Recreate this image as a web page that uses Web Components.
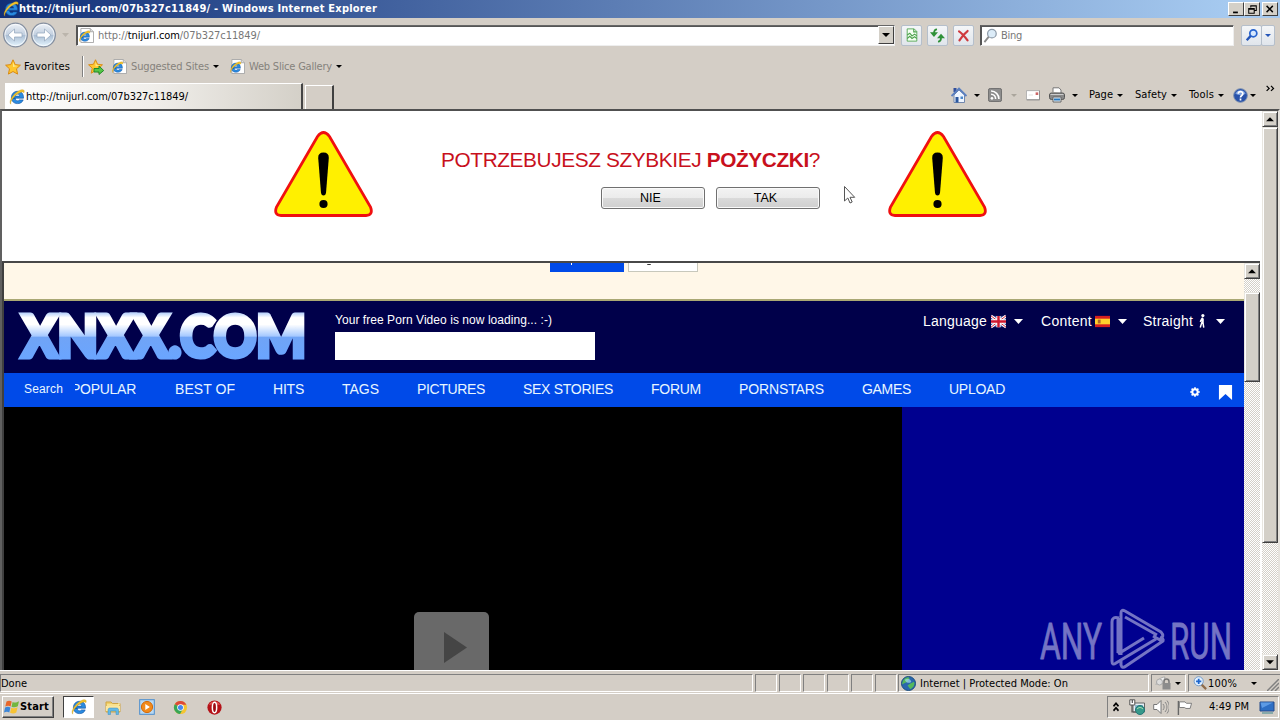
<!DOCTYPE html>
<html lang="en"><head><meta charset="utf-8"><title>Browser desktop</title>
<style>html,body{margin:0;height:100%;overflow:hidden;background:#d4d0c8}</style></head>
<body><desktop-screen></desktop-screen>
<script>
const define=(name,html,after)=>customElements.define(name,class extends HTMLElement{
  constructor(){super();this.attachShadow({mode:'open'});}
  connectedCallback(){this.shadowRoot.innerHTML=typeof html==='function'?html(this):html;if(after)after(this);}
});

/* Text run spaced out to an exact width */
define('fit-text',`<style>:host{display:block;flex:none;white-space:pre;line-height:1.2}span{display:inline-block}</style><span><slot></slot></span>`,el=>{
  const s=el.shadowRoot.querySelector('span'),w=+el.getAttribute('w');
  el.style.width=w+'px';
  s.style.letterSpacing=((w-s.getBoundingClientRect().width)/el.textContent.length)+'px';
});

const E=`<path d="M2.500 9.200h12C14.800 4.800 12.300 2.300 8.600 2.300S2.400 5 2.400 8.600s2.400 6 6.100 6c2.900 0 4.900-1.300 5.700-3.700h-3.800c-.4.600-1 .9-1.800.9-1.400 0-2.200-1-2.300-2.600zM6.400 7.100c.2-1.300 1-2 2.200-2s2 .7 2.100 2z" fill="#2a8be0" stroke="#0f4f9e" stroke-width=".6"/><path d="M2 15.200C-1.300 13.200 4.500 3.800 11 1.200c3.400-1.200 5-.2 3.900 2.600-.6-1.800-5.400-.3-9.300 3.700C2.500 10.800 1 14 2 15.200z" fill="#f2c32c" stroke="#b98d18" stroke-width=".3"/>`;
const PAGE=`<path d="M2 .5h10l3.500 3.500v11.500H2z" fill="#fff" stroke="#a7a7a7"/><path d="M12 .5V4h3.500" fill="#ddd" stroke="#aaa"/><g transform="translate(-.5 2.500) scale(.8)">${E}</g>`;
const STAR=`<path d="M8 .8l2.200 4.800 5.200.6-3.900 3.600 1.100 5.300L8 12.500l-4.600 2.600 1.100-5.300L.6 6.200l5.200-.6z" fill="#ffc62e" stroke="#d98a13"/><path d="M8 3l1.400 3.500 3.500.5L8 8z" fill="#ffe98a"/>`;
const ICONS={
 ie:E,page:PAGE,star:STAR,
 addstar:`<g transform="scale(.94)">${STAR}</g><path d="M6 9.500h5V7l4.700 4.500L11 15.500V13H6z" fill="#55c646" stroke="#23892a"/>`,
 tri:`<path d="M0 0h16L8 9z" fill="currentColor"/>`,
 compat:`<path d="M2.500 1h8l3 3v11h-11z" fill="#f4fff2" stroke="#4fa34f"/><path d="M10 1v3.500h3.500M2.500 8l3-2 2.500 3 3-2 2.500 2M2.500 12l3-2.500L8 12l3-2 2.500 2" fill="none" stroke="#4fa34f" stroke-width="1.300"/>`,
 refresh:`<path d="M7.500 1.500C5.500 1.500 4.300 2.500 4.300 6" fill="none" stroke="#2f9138" stroke-width="2"/><path d="M0 4.500h8.500L4.200 9.500z" fill="#2f9138"/><path d="M8.500 14.500c2 0 3.200-1 3.200-4.500" fill="none" stroke="#2f9138" stroke-width="2"/><path d="M7.500 11H16l-4.200-5z" fill="#2f9138"/>`,
 stop:`<path d="M2.500 3c3 2 7 6.500 10.500 11M13 2.500C9 5.500 6 9 3 14" fill="none" stroke="#cf3a3e" stroke-width="2.700" stroke-linecap="round"/>`,
 mag:`<circle cx="9.500" cy="6" r="4.600" fill="#dcecf8" stroke="#8d9aa8" stroke-width="1.300"/><path d="M6 9.500L1.500 15" stroke="#8a8a8a" stroke-width="2"/>`,
 magb:`<circle cx="9.500" cy="6" r="4" fill="#d6e8ff" stroke="#2864cf" stroke-width="2"/><path d="M6.500 9L2 14" stroke="#2455b8" stroke-width="2.600"/>`,
 home:`<path d="M2.500 1h3v4h-3z" fill="#314f9c"/><path d="M3 8v7.500h10.500V8L8 3z" fill="#eef5ff" stroke="#7187ad"/><path d="M.5 9L8 1.500 15.500 9" fill="none" stroke="#5a7fc0" stroke-width="1.800"/><path d="M4.500 10h3v5.500h-3z" fill="#2a579e"/><path d="M9.500 9.500h2.500V12H9.500z" fill="#4c88ca"/>`,
 rss:`<rect x=".5" y=".5" width="15" height="15" rx="2" fill="#8d8d8d" stroke="#666"/><circle cx="4.500" cy="11.800" r="1.500" fill="#fff"/><path d="M3.500 7.200c3 0 5.200 2.300 5.200 5.500M3.500 3.500c5 0 9 4 9 9.200" fill="none" stroke="#fff" stroke-width="1.800"/>`,
 mail:`<path d="M.5 3h15v10.500H.5z" fill="#fff" stroke="#a8a8a8"/><path d="M1 13.500h14.500V3" fill="none" stroke="#888"/><path d="M11 5h3v3h-3z" fill="#c66"/><path d="M3 8h5" stroke="#ddd"/>`,
 print:`<path d="M4 5V.8h6L12 3v3" fill="#fff" stroke="#777"/><rect x=".5" y="6" width="15" height="6.500" rx="2" fill="#888" stroke="#555"/><path d="M1.500 7.500h13" stroke="#ccc"/><path d="M4 10h8v5H4z" fill="#e9f3fc" stroke="#666"/><path d="M5 12.500h6" stroke="#2878bd" stroke-width="2"/>`,
 help:`<circle cx="8" cy="8" r="7.300" fill="#2952aa" stroke="#7a8eae"/><path d="M2.500 6a6 6 0 0 1 11 0c-3 2-8 2-11 0z" fill="#7ba0e0"/><path d="M5.600 6.200C5.600 3 10.500 3 10.500 6c0 2-2.500 2-2.500 4M8 11.200v2" fill="none" stroke="#fff" stroke-width="1.800"/>`,
 gear:`<circle cx="8" cy="8" r="4.300" fill="none" stroke="#fff" stroke-width="3.200"/><path d="M8 .3v3M8 12.700v3M.3 8h3M12.700 8h3M2.600 2.600l2 2M11.400 11.400l2 2M2.600 13.400l2-2M11.400 4.600l2-2" stroke="#fff" stroke-width="2.600"/>`,
 mark:`<path d="M1 0h14v16L8 9.500 1 16z" fill="#fff"/>`,
 man:`<circle cx="9" cy="1.800" r="1.800" fill="#fff"/><path d="M8.500 4v6M8 9l-2 6.500M9 9L10 15.500M8 5L6 9M9.200 5v5" stroke="#fff" stroke-width="1.700" fill="none"/>`,
 uk:`<path d="M0 2h16v12H0z" fill="#36408e"/><path d="M0 2l16 12M16 2L0 14" stroke="#fff" stroke-width="3"/><path d="M0 2l16 12M16 2L0 14" stroke="#d12335"/><path d="M8 2v12M0 8h16" stroke="#fff" stroke-width="4.600"/><path d="M8 2v12M0 8h16" stroke="#cf1930" stroke-width="2.600"/>`,
 es:`<path d="M0 2h16v12H0z" fill="#d51e20"/><path d="M0 5h16v6H0z" fill="#ffd02c"/><path d="M3 6h3v4H3z" fill="#b36a28"/>`,
 win:`<path d="M2.500 2.500C4.500 1.300 6 1.500 7.700 2.500L6.600 7.400C4.800 6.400 3.200 6.500 1.300 7.600z" fill="#e8672a"/><path d="M8.600 3c2 1 3.800.8 6.400-.7l-1.200 5c-2.200 1.200-4.200 1.200-6.300.4z" fill="#72b63e"/><path d="M1.100 8.500c2-1.100 3.500-1 5.300-.1l-1.100 5c-1.800-1-3.500-.9-5.300.2z" fill="#3c86d8"/><path d="M7.300 8.700c2.200.9 4 .8 6.300-.4l-1.300 5.200c-2 1.200-4 1.200-6.200.2z" fill="#f7c334"/>`,
 folder:`<path d="M1 3h5l1.500 1.500H15V13H1z" fill="#f1cf68" stroke="#cfa544"/><path d="M2 6h12V3.500" fill="none" stroke="#fff3b6"/><path d="M1 7h14v5H1z" fill="#fbe7a0"/><path d="M3 15.500V11c0-1.500 1-2 2-2h6.500c1 0 2 .5 2 2v4.500h-2.500V12H5.500v3.500z" fill="#63b9e5" stroke="#3b8dc0" stroke-width=".5"/>`,
 media:`<rect x=".7" y=".7" width="14.600" height="14.600" fill="#b9d9f2" stroke="#4b8dcc"/><circle cx="8" cy="8" r="5.600" fill="#f28a1b" stroke="#d36b0b"/><path d="M6.300 5v6l4.600-3z" fill="#fff"/>`,
 chrome:`<circle cx="8" cy="8" r="7" fill="#f4c531"/><path d="M8 8L1.900 4.500A7 7 0 0 1 14.200 5H8z" fill="#dd4938"/><path d="M8 8L1.900 4.500A7 7 0 0 0 7.500 15L10.600 9.500z" fill="#38a657"/><circle cx="8" cy="8" r="3.500" fill="#fff"/><circle cx="8" cy="8" r="2.700" fill="#4588ee"/>`,
 opera:`<circle cx="8" cy="8" r="7.600" fill="#b51218"/><path d="M2 5a7 7 0 0 1 12 0z" fill="#df4d4c"/><ellipse cx="8" cy="8" rx="2.300" ry="5.500" fill="#9d0b12" stroke="#fff" stroke-width="1.600"/>`,
 globe:`<circle cx="8" cy="8" r="7.500" fill="#2967ad" stroke="#174a7c"/><path d="M2 5c3-4 6-4 7-3l-2 4-4 2-2 1zM10 8l4-2c1 4-1 6-4 8l-3-4z" fill="#54b85c"/><path d="M4 4c3-2 6-1 7 2-2 2-5 2-7-2z" fill="#9fd8ef" opacity=".7"/>`,
 lock:`<path d="M1 10c1-5 5-8 9-8l-1 4" fill="#eee" stroke="#aaa"/><circle cx="4.500" cy="7" r="3" fill="#ddd" stroke="#aaa"/><path d="M9 8V6.500a2.500 2.500 0 0 1 5 0V8" fill="none" stroke="#777" stroke-width="1.500"/><rect x="7.500" y="8" width="8" height="6.500" fill="#8c8c8c"/>`,
 zoom:`<path d="M9 9l6 6" stroke="#8f6c4c" stroke-width="2.500"/><circle cx="6.500" cy="6" r="5.200" fill="#e1f0ff" stroke="#6b94c3"/><path d="M6.500 3v6M3.500 6h6" stroke="#1d65cc" stroke-width="2"/>`,
 up2:`<path d="M4 7l4-4 4 4M4 13l4-4 4 4" fill="none" stroke="#000" stroke-width="2.400"/>`,
 net:`<path d="M4 4h11.500v9H4z" fill="#e4edf2" stroke="#666"/><path d="M6 6h8v5H6z" fill="#8fb9d0"/><circle cx="11" cy="11" r="4.500" fill="#36998a" stroke="#277"/><path d="M8 10c2-2 4-2 6 0" stroke="#bce4b4" fill="none"/><path d="M.8.8h5V6h-5z" fill="#fff" stroke="#555"/><path d="M3.300 1v3M3 6v7h4" fill="none" stroke="#555" stroke-width="1.200"/>`,
 sound:`<path d="M.7 5.500H4L8 1.500v13L4 10.500H.7z" fill="#fff" stroke="#777"/><path d="M10 5c1.500 2 1.500 4 0 6M12 3c2.600 3 2.600 7 0 10M14 1.500c3 4 3 9 0 13" fill="none" stroke="#888"/>`,
 flag:`<path d="M1.500 1v15" stroke="#666" stroke-width="1.500"/><path d="M2.500 2h6l1.500 1.500h5.500L14 9H9.500L8 8H2.500z" fill="#fff" stroke="#777"/>`,
 desk:`<path d="M1 3h14v9H1z" fill="#2e6fc4" stroke="#244a8a"/><path d="M1.500 3.500H14L3 9z" fill="#5d9be5"/><path d="M3 14h11" stroke="#8aa" stroke-width="2"/>`,
 chev:`<path d="M1 3l4 4-4 4M8 3l4 4-4 4" fill="none" stroke="#000" stroke-width="2"/>`,
 min:`<path d="M3 11h7v2.500H3z"/>`,
 restore:`<path d="M5.500 5V2.500h8v7H11M5.500 3h8M2.500 6.500h8v7h-8zM2.500 7.500h8" fill="none" stroke="#000" stroke-width="1.500"/>`,
 close:`<path d="M2.500 3l10 10M12.500 3l-10 10" stroke="#000" stroke-width="2.300"/>`,
 arrU:`<path d="M3.500 10.500h9L8 6z"/>`,arrD:`<path d="M3.500 6h9L8 10.500z"/>`
};
define('x-icon',el=>{const s=el.getAttribute('s')||16,h=el.getAttribute('h')||s;
 return `<style>:host{display:block;flex:none;width:${s}px;height:${h}px}svg{display:block}</style><svg width="${s}" height="${h}" viewBox="0 0 16 ${el.getAttribute('n')==='tri'?9:16}" preserveAspectRatio="none">${ICONS[el.getAttribute('n')]}</svg>`;});

define('title-bar',`<style>:host{display:flex;align-items:center;box-sizing:border-box;padding:0 2px 0 3px;background:linear-gradient(90deg,#123078,#a6caf0 96%);color:#fff;font:bold 11px "DejaVu Sans Condensed","DejaVu Sans",sans-serif}
b{display:grid;place-items:center;box-sizing:border-box;width:16px;height:14px;background:#d4d0c8;border:1px solid;border-color:#fff #404040 #404040 #fff}b.c{margin-left:2px}.f{flex:1}</style>
<x-icon n="ie"></x-icon><fit-text w="358">http://tnijurl.com/07b327c11849/ - Windows Internet Explorer</fit-text><div class="f"></div><b><x-icon n="min" s="11"></x-icon></b><b><x-icon n="restore" s="11"></x-icon></b><b class="c"><x-icon n="close" s="10"></x-icon></b>`);

define('nav-circle',`<style>:host{display:block;flex:none;width:27px;height:26px}</style><svg width="27" height="26" viewBox="0 0 27 26"><defs><linearGradient id="g" x2="0" y2="1"><stop offset="0" stop-color="#eef2f7"/><stop offset=".48" stop-color="#c3d0e0"/><stop offset=".5" stop-color="#a9bcd2"/><stop offset="1" stop-color="#e6f6ff"/></linearGradient></defs><circle cx="13.500" cy="13" r="11.800" fill="url(#g)" stroke="#8690a0" stroke-width="1.300"/><circle cx="13.500" cy="13" r="10.600" fill="none" stroke="#fff" opacity=".7"/><path class="a" d="M6 13l6.500-6v4H20v4h-7.500v4z" fill="#fff" stroke="#8fa3ba" stroke-width=".7"/></svg>`,el=>{if(el.hasAttribute('fwd'))el.shadowRoot.querySelector('.a').setAttribute('transform','translate(27) scale(-1 1)');});

define('address-row',`<style>:host{display:flex;align-items:center;box-sizing:border-box;padding:0 5px 2px 2px;font:11px "DejaVu Sans Condensed","DejaVu Sans",sans-serif;color:#777}
.box{display:flex;align-items:center;box-sizing:border-box;height:21px;background:#fff;border:1px solid;border-color:#666 #eee #eee #555;box-shadow:inset 1px 1px #555}
.addr{width:819px;margin-left:7px;padding-left:2px}em{font-style:normal;color:#000}.f{flex:1}fit-text{padding-top:1px}
.dd{display:grid;place-items:center;box-sizing:border-box;width:16px;height:18px;background:#d4d0c8;border:1px solid;border-color:#fff #404040 #404040 #fff;color:#000}
.btn{display:grid;place-items:center;box-sizing:border-box;width:21px;height:21px;border:1px solid #b5bfcb;background:linear-gradient(#f4f6f8,#e0e5eb);border-radius:2px}
.s{width:254px;margin-left:6px;padding-left:2px}</style>
<nav-circle></nav-circle><nav-circle fwd style="margin-left:1px"></nav-circle><x-icon n="tri" s="7" h="4" style="margin-left:5px;color:#bbb5ac"></x-icon>
<div class="box addr"><x-icon n="page" s="15"></x-icon><fit-text w="162" style="margin-left:4px">http://<em>tnijurl.com</em>/07b327c11849/</fit-text><div class="f"></div><div class="dd"><x-icon n="tri" s="8" h="4"></x-icon></div></div>
<div class="btn" style="margin-left:6px"><x-icon n="compat" s="14"></x-icon></div><div class="btn" style="margin-left:5px"><x-icon n="refresh" s="15"></x-icon></div><div class="btn" style="margin-left:5px"><x-icon n="stop" s="13"></x-icon></div>
<div class="box s"><x-icon n="mag" s="15"></x-icon><fit-text w="21" style="margin-left:3px">Bing</fit-text></div><div class="f"></div>
<div class="btn"><x-icon n="magb" s="14"></x-icon></div><div class="btn" style="width:14px;color:#2455b8;margin-left:-1px"><x-icon n="tri" s="6" h="3"></x-icon></div>`);

define('favorites-row',`<style>:host{display:flex;align-items:center;box-sizing:border-box;padding:0 0 3px 5px;font:11px "DejaVu Sans Condensed","DejaVu Sans",sans-serif;color:#000}
i{width:1px;height:21px;background:#808080;border-right:1px solid #fff;margin-left:12px}.g{color:#85827c;padding-top:1px}</style>
<x-icon n="star"></x-icon><fit-text w="46" style="margin-left:3px">Favorites</fit-text><i></i><x-icon n="addstar" style="margin-left:4px"></x-icon>
<x-icon n="page" s="15" style="margin-left:8px"></x-icon><fit-text class="g" w="78" style="margin-left:4px">Suggested Sites</fit-text><x-icon n="tri" s="6" h="3" style="margin-left:4px"></x-icon>
<x-icon n="page" s="15" style="margin-left:11px"></x-icon><fit-text class="g" w="83" style="margin-left:4px">Web Slice Gallery</fit-text><x-icon n="tri" s="6" h="3" style="margin-left:4px"></x-icon>`);

define('tab-row',`<style>:host{display:flex;box-sizing:border-box;font:11px "DejaVu Sans Condensed","DejaVu Sans",sans-serif;color:#000}
.tab{display:flex;align-items:center;box-sizing:border-box;width:298px;height:26px;margin:1px 0 0 5px;padding:0 0 0 4px;background:linear-gradient(90deg,#fff,#f0eeea 50%,#d4d0c8);border-right:2px solid #444;border-top:1px solid #fff}
.new{box-sizing:border-box;width:29px;height:24px;margin:3px 0 0 2px;border:1px solid #fff;border-right:2px solid #404040;border-bottom:0}
.tools{display:flex;align-items:center;flex:1;height:26px;margin-left:617px;padding-bottom:2px}</style>
<div class="tab"><x-icon n="ie"></x-icon><fit-text w="162" style="margin-left:1px">http://tnijurl.com/07b327c11849/</fit-text></div><div class="new"></div>
<div class="tools"><x-icon n="home"></x-icon><x-icon n="tri" s="6" h="3" style="margin-left:7px"></x-icon><x-icon n="rss" s="14" style="margin-left:8px"></x-icon><x-icon n="tri" s="6" h="3" style="margin-left:9px;color:#aaa59c"></x-icon><x-icon n="mail" s="14" style="margin-left:9px"></x-icon><x-icon n="print" style="margin-left:9px"></x-icon><x-icon n="tri" s="6" h="3" style="margin-left:7px"></x-icon>
<fit-text w="24" style="margin-left:11px">Page</fit-text><x-icon n="tri" s="6" h="3" style="margin-left:4px"></x-icon><fit-text w="32" style="margin-left:12px">Safety</fit-text><x-icon n="tri" s="6" h="3" style="margin-left:4px"></x-icon><fit-text w="25" style="margin-left:12px">Tools</fit-text><x-icon n="tri" s="6" h="3" style="margin-left:4px"></x-icon><x-icon n="help" s="15" style="margin-left:9px"></x-icon><x-icon n="tri" s="6" h="3" style="margin-left:2px"></x-icon><x-icon n="chev" s="10" style="margin:-12px 0 0 10px"></x-icon></div>`);

define('scroll-bar',el=>`<style>:host{display:flex;flex-direction:column;flex:none;width:16px;background:repeating-conic-gradient(#fff 0 25%,#d4d0c8 0 50%) 0 0/2px 2px}
div{box-sizing:border-box;background:#d4d0c8;border:1px solid;border-color:#e8e6e0 #404040 #404040 #e8e6e0;box-shadow:inset 1px 1px #fff,inset -1px -1px #808080}
.b{display:grid;place-items:center;height:16px;flex:none}.t{height:${el.getAttribute('thumb')}px;margin-top:${el.getAttribute('gap')}px}.f{flex:1;visibility:hidden}</style>
<div class="b"><x-icon n="arrU" s="14"></x-icon></div><div class="t"></div><div class="f"></div>${el.hasAttribute('down')?'<div class="b"><x-icon n="arrD" s="14"></x-icon></div>':''}`);

define('warning-sign',`<style>:host{display:block;flex:none;width:100px;height:88px}</style><svg width="100" height="88" viewBox="0 0 100 88"><path d="M43.500 6.500Q49.500-1.500 55.500 6.500L96.500 77Q99.500 85 92 85.500H7Q-.5 85 2.500 77z" fill="#fff000" stroke="#f01010" stroke-width="2.800"/><path d="M44.200 28Q44 22.500 49.500 22.500T54.800 28L52 63Q51.500 65.500 49.500 65.500T47 63z"/><circle cx="49.500" cy="74" r="4.100"/></svg>`);

define('push-button',`<style>:host{display:grid;place-items:center;box-sizing:border-box;width:104px;height:22px;border:1px solid #707070;border-radius:3px;box-shadow:inset 0 0 0 1px #fafafa;background:linear-gradient(#f3f3f3,#ebebeb 50%,#dadada 50%,#cfcfcf);font:12.500px "Liberation Sans",sans-serif;color:#000;padding:0 5px 0 0}</style><slot></slot>`);

define('loan-banner',`<style>:host{display:flex;position:relative;align-items:flex-start;box-sizing:border-box;height:150px;padding:19px 0 0 272px;background:#fff}
.m{width:379px;margin:0 68px 0 67px;padding-top:18px;font:20.800px "Liberation Sans",sans-serif;color:#c8101c}.r{display:flex;justify-content:flex-end;gap:11px;margin-top:14px}
.cur{position:absolute;left:842px;top:75px}</style><warning-sign></warning-sign><div class="m"><fit-text w="379">POTRZEBUJESZ SZYBKIEJ <b>POŻYCZKI</b>?</fit-text><div class="r"><push-button>NIE</push-button><push-button>TAK</push-button></div></div><warning-sign></warning-sign>
<svg class="cur" width="12" height="19" viewBox="0 0 12 19"><path d="M.5.5v14.500l3.300-3 2.200 5 2.200-1-2.200-4.700h4.700z" fill="#fff" stroke="#555"/></svg>`);

define('site-header',`<style>:host{display:flex;box-sizing:border-box;height:72px;background:#00004a;color:#fff;font:12px "Liberation Sans",sans-serif}
.logo{flex:none;margin:4px 0 0 14px;width:296px;height:62px;overflow:visible}.v{margin:12px 0 0 21px;width:260px}.v p{height:28px;margin:5px 0 0;background:#fff}
.o{display:flex;align-items:center;height:20px;margin:10px 0 0 328px;font-size:14px}</style>
<svg class="logo" viewBox="0 0 296 62"><defs><linearGradient id="l" gradientUnits="userSpaceOnUse" y1="8" y2="54" x1="0" x2="0"><stop offset="0" stop-color="#b9d2fb"/><stop offset=".1" stop-color="#fff"/><stop offset=".25" stop-color="#fff"/><stop offset=".5" stop-color="#a6c9ff"/><stop offset=".53" stop-color="#70a4f6"/><stop offset="1" stop-color="#6aa5ff"/></linearGradient></defs><text x="4" y="52" font-family="Lato" font-weight="900" font-size="57" textLength="284" lengthAdjust="spacingAndGlyphs" fill="url(#l)" stroke="url(#l)" stroke-width="5">XNXX.COM</text></svg>
<div class="v"><fit-text w="217">Your free Porn Video is now loading... :-)</fit-text><p></p></div>
<div class="o"><fit-text w="64">Language</fit-text><x-icon n="uk" s="15" style="margin-left:4px"></x-icon><x-icon n="tri" s="9" h="5" style="margin-left:8px"></x-icon><fit-text w="51" style="margin-left:18px">Content</fit-text><x-icon n="es" s="15" style="margin-left:3px"></x-icon><x-icon n="tri" s="9" h="5" style="margin-left:8px"></x-icon><fit-text w="50" style="margin-left:16px">Straight</fit-text><x-icon n="man" s="14" style="margin-left:2px"></x-icon><x-icon n="tri" s="9" h="5" style="margin-left:7px"></x-icon></div>`);

define('site-nav',`<style>:host{display:flex;align-items:center;box-sizing:border-box;height:34px;padding:0 11px 1px 20px;background:#004ae8;color:#e8f6ff;font:14px "Liberation Sans",sans-serif}
.c{display:flex;justify-content:flex-end;overflow:hidden;width:61px;margin-left:12px}.l{display:flex;gap:38px;margin-left:38px;flex:1}</style>
<fit-text w="39" style="font-size:12px">Search</fit-text><div class="c"><fit-text w="65">POPULAR</fit-text></div>
<div class="l" style="margin-left:39px"><fit-text w="60">BEST OF</fit-text><fit-text w="31">HITS</fit-text><fit-text w="37">TAGS</fit-text><fit-text w="68">PICTURES</fit-text><fit-text w="90">SEX STORIES</fit-text><fit-text w="50">FORUM</fit-text><fit-text w="85">PORNSTARS</fit-text><fit-text w="49">GAMES</fit-text><fit-text w="56">UPLOAD</fit-text></div>
<x-icon n="gear" s="10" style="margin-top:4px"></x-icon><x-icon n="mark" s="15" style="margin:6px 0 0 18px"></x-icon>`);

define('video-stage',`<style>:host{display:grid;grid-template-columns:898px 1fr;height:263px;background:#00008f}
.p{display:flex;justify-content:center;align-items:flex-end;background:#000;padding-right:3px}.k{width:75px;height:58px;border-radius:5px 5px 0 0;background:#696969}
.w{display:flex;align-items:flex-end;justify-content:flex-end;padding-right:11px}svg{display:block;overflow:visible}</style>
<div class="p"><svg class="k" viewBox="0 0 75 58"><path d="M30 20v31l23-15.500z" fill="#454545"/></svg></div>
<div class="w"><svg width="196" height="64" viewBox="0 0 196 64" fill="none" stroke="#7474c4" stroke-width="3" stroke-linejoin="round"><g fill="#7474c4" stroke-width=".8" font-family="Roboto" font-size="50"><text x="3" y="53" textLength="62" lengthAdjust="spacingAndGlyphs">ANY</text><text x="133" y="53" textLength="62" lengthAdjust="spacingAndGlyphs">RUN</text></g><path d="M84 49V7Q84 3 88 5L124 26Q128 30 123 34L116 30M88 11L120 29M82 12Q75 10 75 16V55Q75 60 79 57L119 33M81 12V47M84 55V59Q85 63 89 60L126 35Q127 33 123 31M81 48L107 32"/></svg></div>`);

define('site-frame',`<style>:host{display:flex;flex:none;width:1256px;height:407px;border-left:2px solid #404040;border-top:2px solid #484848;overflow:hidden}
.b{width:1240px}.a{display:flex;box-sizing:border-box;height:38px;background:#fff7e8;border-bottom:2px solid #aaa874;padding-left:546px}.x{width:74px;height:9px;background:#004ae8}.y{box-sizing:border-box;width:70px;height:9px;margin-left:4px;background:#fff;border:1px solid #c8c8bc;border-top:0}
.x:before{content:"";display:block;width:1px;height:2px;margin-left:21px;background:#fff}.y:before{content:"";display:block;width:4px;height:1px;border-bottom:1px solid #333;border-radius:2px;margin-left:18px}</style>
<div class="b"><div class="a"><div class="x"></div><div class="y"></div></div><site-header></site-header><site-nav></site-nav><video-stage></video-stage></div><scroll-bar gap="13" thumb="90"></scroll-bar>`);

define('page-view',`<style>:host{display:flex;box-sizing:border-box;border-top:2px solid #505050;border-left:2px solid #606060;border-right:2px solid #e6e3dd;background:#fff}.m{width:1260px;overflow:hidden}</style><div class="m"><loan-banner></loan-banner><site-frame></site-frame></div><scroll-bar gap="0" thumb="416" down></scroll-bar>`);

define('status-bar',`<style>:host{display:flex;box-sizing:border-box;padding:3px 0 2px;gap:2px;border-top:1px solid #fff;border-bottom:1px solid #fff;font:11px "DejaVu Sans Condensed","DejaVu Sans",sans-serif;color:#000}
div{display:flex;align-items:center;box-sizing:border-box;border:1px solid;border-color:#808080 #fff #fff #808080;height:18px}.s{width:22px}fit-text{padding-top:1px}</style>
<div style="width:753px"><fit-text w="26">Done</fit-text></div><div class="s"></div><div class="s"></div><div class="s"></div><div class="s"></div><div class="s"></div><div class="s"></div>
<div style="width:251px;padding-left:2px;margin-left:-1px"><x-icon n="globe" s="15"></x-icon><fit-text w="148" style="margin-left:4px">Internet | Protected Mode: On</fit-text></div>
<div style="width:35px;padding-left:3px"><x-icon n="lock"></x-icon><x-icon n="tri" s="6" h="3" style="margin-left:4px"></x-icon></div>
<div style="flex:1;border-right:0;padding-left:4px"><x-icon n="zoom" s="14"></x-icon><fit-text w="29" style="margin-left:1px">100%</fit-text><x-icon n="tri" s="6" h="3" style="margin-left:14px"></x-icon><svg width="12" height="12" style="margin:4px 0 0 10px"><path d="M0 12L12 0M4 12l8-8M8 12l4-4" stroke="#808080" stroke-width="1.500"/></svg></div>`);

define('task-bar',`<style>:host{display:flex;align-items:center;box-sizing:border-box;padding:1px 1px 1px 2px;font:11px "DejaVu Sans Condensed","DejaVu Sans",sans-serif;color:#000}
.st{display:flex;align-items:center;box-sizing:border-box;width:52px;height:22px;padding-left:1px;border:1px solid;border-color:#fff #404040 #404040 #fff;box-shadow:inset -1px -1px #808080;font-weight:bold}
.ac{display:grid;place-items:center;box-sizing:border-box;width:31px;height:22px;margin-left:9px;background:#fff;border:1px solid;border-color:#404040 #fff #fff #404040}
.tr{display:flex;align-items:center;box-sizing:border-box;width:172px;height:22px;border:1px solid;border-color:#808080 #fff #fff #808080;padding-left:3px}.f{flex:1}</style>
<div class="st"><x-icon n="win"></x-icon><fit-text w="29">Start</fit-text></div><div class="ac"><x-icon n="ie"></x-icon></div>
<x-icon n="folder" style="margin-left:11px"></x-icon><x-icon n="media" style="margin-left:18px"></x-icon><x-icon n="chrome" s="15" style="margin-left:18px"></x-icon><x-icon n="opera" s="15" style="margin-left:19px"></x-icon><div class="f"></div>
<div class="tr"><x-icon n="up2" s="10" h="12"></x-icon><x-icon n="net" style="margin-left:8px"></x-icon><x-icon n="sound" style="margin-left:8px"></x-icon><x-icon n="flag" s="15" style="margin-left:8px"></x-icon><fit-text w="40" style="margin-left:17px">4:49 PM</fit-text><x-icon n="desk" style="margin-left:10px"></x-icon></div>`);

define('desktop-screen',`<style>:host{display:grid;width:1280px;height:720px;overflow:hidden;grid-template-rows:18px 36px 28px 27px 561px 24px 26px;background:#d4cec6}</style>
<title-bar></title-bar><address-row></address-row><favorites-row></favorites-row><tab-row></tab-row><page-view></page-view><status-bar></status-bar><task-bar></task-bar>`);
</script></body></html>
